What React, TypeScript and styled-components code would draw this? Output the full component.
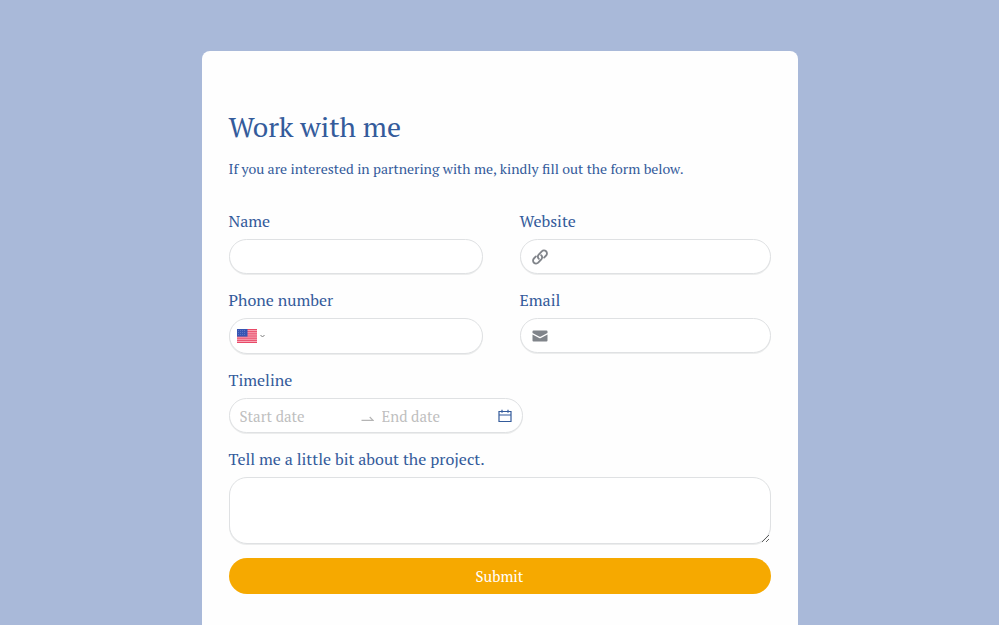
import React from 'react';
import styled, { createGlobalStyle } from 'styled-components';

const colors = {
  page: '#a9b9d9',
  card: '#fefefe',
  ink: '#345b9b',
  line: '#dfe1e3',
  muted: '#bfbfbf',
  icon: '#80848a',
  accent: '#f6a900',
};

const GlobalStyle = createGlobalStyle`
  *, *::before, *::after { box-sizing: border-box; }
  body {
    margin: 0;
    background: ${colors.page};
    color: ${colors.ink};
    font-family: "PT Serif", "Liberation Serif", serif;
    overflow-x: hidden;
  }
  button, input, textarea { font: inherit; color: inherit; }
`;

const Page = styled.main`
  display: flex;
  justify-content: center;
  min-height: 100vh;
  padding: 51px 24px 0;
`;

const Card = styled.section`
  flex: 1;
  max-width: 596px;
  padding: 56px 27px 32px;
  background: ${colors.card};
  border-radius: 8px 8px 0 0;
`;

const Title = styled.h1`
  margin: 0;
  font-size: 28px;
  font-weight: 400;
  line-height: 40px;
`;

const Intro = styled.p`
  margin: 10px 0 28px;
  font-size: 14px;
  line-height: 24px;
`;

const Form = styled.form`
  display: grid;
  grid-template-columns: 254fr 251fr;
  column-gap: 37px;
  row-gap: 14px;
  align-items: start;
`;

const Field = styled.div<{ $wide?: boolean }>`
  display: flex;
  flex-direction: column;
  gap: 6px;
  min-width: 0;
  grid-column: ${({ $wide }) => ($wide ? '1 / -1' : 'auto')};
`;

const Label = styled.label`
  font-size: 16px;
  line-height: 24px;
`;

const Control = styled.div<{ $tall?: boolean }>`
  display: flex;
  align-items: center;
  height: ${({ $tall }) => ($tall ? '36px' : '35px')};
  padding: 0 11px;
  gap: 8px;
  border: 1px solid ${colors.line};
  border-radius: 18px;
  background: #fff;
  box-shadow: 0 1px 0 #eceded;
`;

const PhoneControl = styled(Control)`
  padding-left: 7px;
`;

const RangeControl = styled(Control)`
  display: grid;
  grid-template-columns: 113fr auto 108fr auto;
  width: 294px;
  max-width: 100%;
  padding: 0 10px;
`;

const TextInput = styled.input`
  flex: 1;
  min-width: 0;
  width: 100%;
  height: 100%;
  padding: 0;
  border: 0;
  outline: 0;
  background: transparent;
  font-size: 15px;
  &::placeholder { color: ${colors.muted}; opacity: 1; }
`;

const CountryButton = styled.button`
  display: flex;
  align-items: center;
  gap: 3px;
  padding: 0;
  border: 0;
  background: none;
  cursor: pointer;
`;

const IconButton = styled.button`
  display: flex;
  padding: 0;
  border: 0;
  background: none;
  cursor: pointer;
`;

const Message = styled.textarea`
  display: block;
  width: 100%;
  height: 67px;
  padding: 8px 12px;
  border: 1px solid ${colors.line};
  border-radius: 18px;
  outline: 0;
  background: #fff;
  box-shadow: 0 1px 0 #eceded;
  resize: vertical;
  font-size: 15px;
`;

const Submit = styled.button`
  grid-column: 1 / -1;
  height: 36px;
  border: 0;
  border-radius: 18px;
  background: ${colors.accent};
  color: #fff;
  font-size: 15px;
  line-height: 24px;
  cursor: pointer;
`;

const LinkIcon = () => (
  <svg width="16" height="16" viewBox="0 0 16 16" fill="none" stroke={colors.icon} strokeWidth="1.8" strokeLinecap="round" aria-hidden="true">
    <path d="M6.9 9.8a3 3 0 0 1-.2-4.1l3.1-3.4a3 3 0 0 1 4.3 4.2l-2 2.1" />
    <path d="M9.1 6.2a3 3 0 0 1 .2 4.1l-3.1 3.4a3 3 0 0 1-4.3-4.2l2-2.1" />
  </svg>
);

const MailIcon = () => (
  <svg width="16" height="16" viewBox="0 0 16 16" fill={colors.icon} aria-hidden="true">
    <path d="M1.5 2.5h13a1 1 0 0 1 1 1v1.4L8.5 8.7a1 1 0 0 1-1 0L.5 4.9V3.5a1 1 0 0 1 1-1z" />
    <path d="M.5 6.5l6.6 3.6a2 2 0 0 0 1.8 0l6.6-3.6v6a1 1 0 0 1-1 1h-13a1 1 0 0 1-1-1z" />
  </svg>
);

const CalendarIcon = () => (
  <svg width="14" height="14" viewBox="0 0 14 14" fill="none" stroke={colors.ink} strokeWidth="1.2" aria-hidden="true">
    <path d="M1 2.5h12v10H1zM1 6h12M4 .7v3M10 .7v3" />
  </svg>
);

const ArrowIcon = () => (
  <svg width="13" height="14" viewBox="0 0 13 14" fill="none" stroke="#b5b5b5" strokeWidth="1.1" aria-hidden="true">
    <path d="M.5 11.4h11.6L8.7 8" />
  </svg>
);

const Chevron = () => (
  <svg width="5" height="4" viewBox="0 0 5 4" fill="none" stroke="#7d7d7d" strokeWidth="1" aria-hidden="true">
    <path d="M.5 1l2 2 2-2" />
  </svg>
);

const stripes = [0, 1, 2, 3, 4, 5, 6];
const starRows = [1.3, 3.3, 5.3];
const starColumns = [1.5, 3.5, 5.5, 7.5];

const Flag = () => (
  <svg width="20" height="14" viewBox="0 0 20 14" aria-hidden="true">
    <rect width="20" height="14" fill="#f9aebc" />
    {stripes.map((i) => (
      <rect key={i} y={i * 2.154} width="20" height="1.1" fill="#e84a68" />
    ))}
    <rect width="10.5" height="7.6" fill="#3655b3" />
    {starRows.map((y) => starColumns.map((x) => <circle key={`${x}-${y}`} cx={x} cy={y} r=".4" fill="#a9b8e4" />))}
  </svg>
);

export default function App() {
  return (
    <>
      <GlobalStyle />
      <Page>
        <Card>
          <Title>Work with me</Title>
          <Intro>If you are interested in partnering with me, kindly fill out the form below.</Intro>
          <Form onSubmit={(event) => event.preventDefault()}>
            <Field>
              <Label htmlFor="name">Name</Label>
              <Control>
                <TextInput id="name" type="text" />
              </Control>
            </Field>
            <Field>
              <Label htmlFor="website">Website</Label>
              <Control>
                <LinkIcon />
                <TextInput id="website" type="url" />
              </Control>
            </Field>
            <Field>
              <Label htmlFor="phone">Phone number</Label>
              <PhoneControl $tall>
                <CountryButton type="button" aria-label="Country: United States">
                  <Flag />
                  <Chevron />
                </CountryButton>
                <TextInput id="phone" type="tel" />
              </PhoneControl>
            </Field>
            <Field>
              <Label htmlFor="email">Email</Label>
              <Control>
                <MailIcon />
                <TextInput id="email" type="email" />
              </Control>
            </Field>
            <Field $wide>
              <Label htmlFor="start">Timeline</Label>
              <RangeControl>
                <TextInput id="start" type="text" placeholder="Start date" />
                <ArrowIcon />
                <TextInput type="text" placeholder="End date" aria-label="End date" />
                <IconButton type="button" aria-label="Open calendar">
                  <CalendarIcon />
                </IconButton>
              </RangeControl>
            </Field>
            <Field $wide>
              <Label htmlFor="message">Tell me a little bit about the project.</Label>
              <Message id="message" />
            </Field>
            <Submit type="submit">Submit</Submit>
          </Form>
        </Card>
      </Page>
    </>
  );
}
